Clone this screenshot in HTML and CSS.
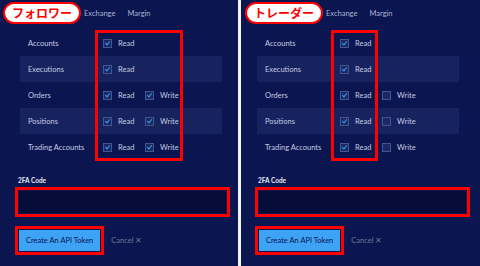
FILE: index.html
```html
<!DOCTYPE html>
<html>
<head>
<meta charset="utf-8">
<title>API Token</title>
<link rel="stylesheet" href="styles.css">
</head>
<body>
<div class="shots">

<div class="panel left">
  <div class="tabs">
    <span class="pill">フォロワー</span>
    <span class="tab">Exchange</span>
    <span class="tab">Margin</span>
  </div>
  <div class="perms">
    <div class="row"><span class="name">Accounts</span><span class="opt"><i class="cb on"></i>Read</span></div>
    <div class="row band"><span class="name">Executions</span><span class="opt"><i class="cb on"></i>Read</span></div>
    <div class="row"><span class="name">Orders</span><span class="opt"><i class="cb on"></i>Read</span><span class="opt"><i class="cb on"></i>Write</span></div>
    <div class="row band"><span class="name">Positions</span><span class="opt"><i class="cb on"></i>Read</span><span class="opt"><i class="cb on"></i>Write</span></div>
    <div class="row"><span class="name">Trading Accounts</span><span class="opt"><i class="cb on"></i>Read</span><span class="opt"><i class="cb on"></i>Write</span></div>
    <div class="mark mark-left"></div>
  </div>
  <div class="code">
    <b>2FA Code</b>
    <div class="hl"><div class="input"></div></div>
  </div>
  <div class="actions">
    <div class="hl"><span class="btn">Create An API Token</span></div>
    <span class="cancel">Cancel &#x2715;</span>
  </div>
</div>

<div class="panel right">
  <div class="tabs">
    <span class="pill">トレーダー</span>
    <span class="tab">Exchange</span>
    <span class="tab">Margin</span>
  </div>
  <div class="perms">
    <div class="row"><span class="name">Accounts</span><span class="opt"><i class="cb on"></i>Read</span></div>
    <div class="row band"><span class="name">Executions</span><span class="opt"><i class="cb on"></i>Read</span></div>
    <div class="row"><span class="name">Orders</span><span class="opt"><i class="cb on"></i>Read</span><span class="opt"><i class="cb"></i>Write</span></div>
    <div class="row band"><span class="name">Positions</span><span class="opt"><i class="cb on"></i>Read</span><span class="opt"><i class="cb"></i>Write</span></div>
    <div class="row"><span class="name">Trading Accounts</span><span class="opt"><i class="cb on"></i>Read</span><span class="opt"><i class="cb"></i>Write</span></div>
    <div class="mark mark-right"></div>
  </div>
  <div class="code">
    <b>2FA Code</b>
    <div class="hl"><div class="input"></div></div>
  </div>
  <div class="actions">
    <div class="hl"><span class="btn">Create An API Token</span></div>
    <span class="cancel">Cancel &#x2715;</span>
  </div>
</div>

</div>
</body>
</html>
```

FILE: styles.css
```css
html, body {
  margin: 0;
  padding: 0;
  background: #f2f3f7;
}
.shots {
  display: flex;
  gap: 3px;
  width: 480px;
  height: 266px;
}
.panel {
  background: #0b1550;
  height: 266px;
  color: #c5cbe2;
  font-family: Lato, "Liberation Sans", sans-serif;
  box-sizing: border-box;
}
.left {
  width: 238px;
  padding-left: 15px;
}
.right {
  width: 239px;
  padding-left: 14px;
}
.tabs {
  display: flex;
  align-items: center;
  height: 30px;
  margin-left: -12px;
}
.right .tabs {
  margin-left: -10px;
}
.pill {
  background: #fff;
  border: 2px solid #f00;
  border-radius: 11px;
  color: #f00;
  font-family: "Noto Sans CJK JP", sans-serif;
  font-weight: 700;
  font-size: 12px;
  line-height: 18px;
  padding: 0 7px;
  margin-top: -4px;
}
.tab {
  font-size: 7.5px;
  color: #aab2d4;
  margin-left: 3px;
  margin-right: 9px;
  margin-top: -4px;
}
.perms {
  position: relative;
  width: 202px;
  margin-left: 5px;
}
.right .perms {
  margin-left: 2px;
}
.row {
  display: flex;
  align-items: center;
  height: 26px;
  font-size: 7.5px;
}
.band {
  background: #16235f;
}
.name {
  width: 75px;
  padding-left: 8px;
}
.opt {
  display: flex;
  align-items: center;
  width: 42px;
}
.cb {
  width: 7px;
  height: 7px;
  border: 1px solid #44548c;
  background: #1a2866;
  margin-right: 6px;
  position: relative;
}
.cb.on::after {
  content: "";
  position: absolute;
  left: 2px;
  top: 0;
  width: 2px;
  height: 4px;
  border: solid #3b9be8;
  border-width: 0 1.5px 1.5px 0;
  transform: rotate(40deg);
}
.mark {
  position: absolute;
  top: 0;
  height: 131px;
  border: 3px solid #f00;
  box-sizing: border-box;
}
.mark-left {
  left: 75px;
  width: 88px;
}
.mark-right {
  left: 74px;
  width: 47px;
}
.code {
  margin-top: 17px;
}
.code b {
  display: block;
  font-size: 6.5px;
  color: #e6e8f2;
  margin-left: 3px;
  margin-bottom: 3px;
}
.hl {
  border: 3px solid #f00;
  padding: 1px;
  display: inline-block;
}
.code .hl {
  display: block;
  width: 207px;
}
.input {
  height: 22px;
  background: #060c38;
}
.actions {
  display: flex;
  align-items: center;
  margin-top: 9px;
}
.btn {
  display: block;
  background: #3ea3f5;
  color: #0b1550;
  font-size: 7.5px;
  line-height: 21px;
  padding: 0 7px;
}
.cancel {
  font-size: 7.5px;
  color: #6b7499;
  margin-left: 7px;
}
```
